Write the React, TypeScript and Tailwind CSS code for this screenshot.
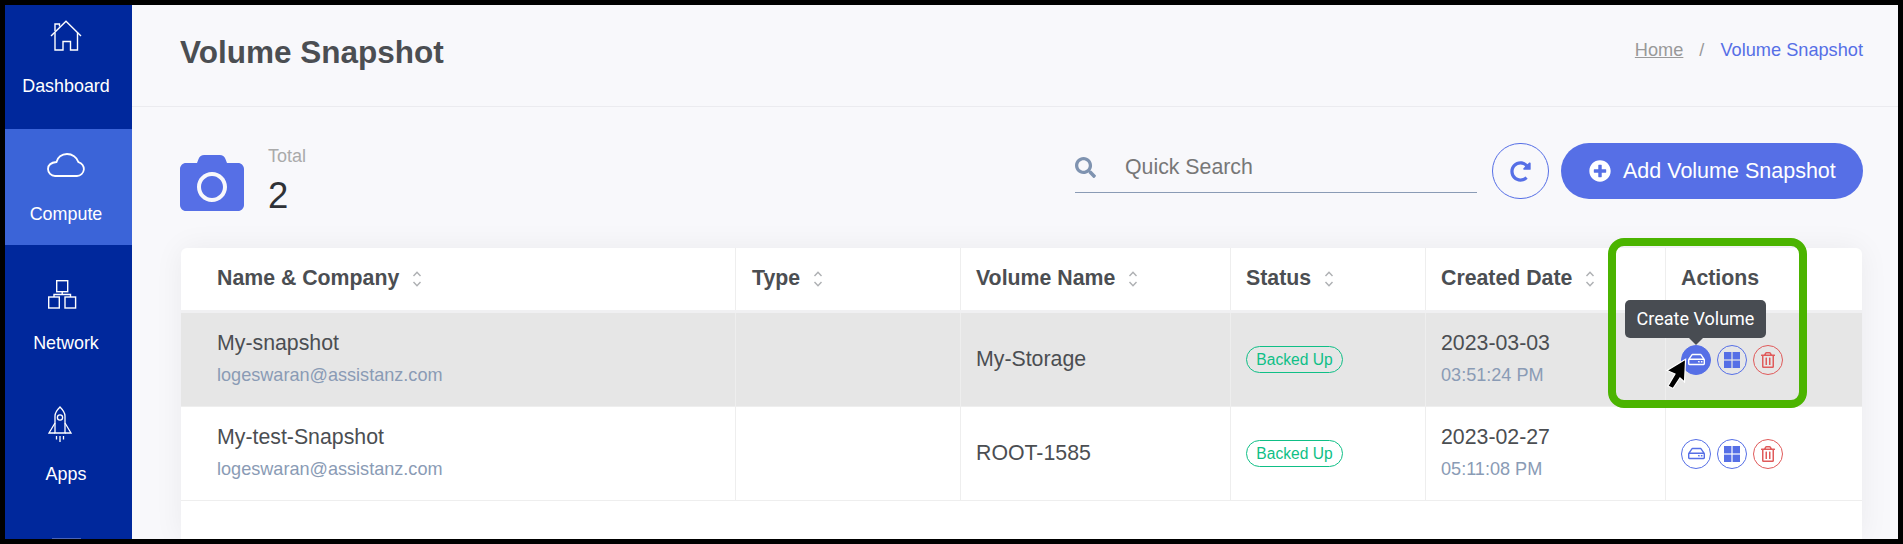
import React from "react";
import { FaCamera, FaPlusCircle, FaRedoAlt, FaRegHdd, FaRegTrashAlt, FaSearch } from "react-icons/fa";

function HomeIcon() {
  return (
    <svg width="32" height="31" viewBox="0 0 32 31" fill="none" stroke="white" strokeWidth="1.4">
      <path d="M1 16 16 1.2 31 16" />
      <path d="M5 11V4H9.5V6.5" />
      <path d="M5 12.5V30H13V21.5H20.5V30H27.5V12.5" />
    </svg>
  );
}

function CloudIcon() {
  return (
    <svg width="38" height="24" viewBox="0 0 38 24" fill="none" stroke="white" strokeWidth="1.8">
      <path d="M8 23H30a7 7 0 0 0 1.5-13.8C30 4 25 1 20 1 14.5 1 10.5 4.5 9.5 9 4.5 9.5 1 12 1 16a7 7 0 0 0 7 7Z" />
    </svg>
  );
}

function NetworkIcon() {
  return (
    <svg width="29" height="29" viewBox="0 0 29 29" fill="none" stroke="white" strokeWidth="1.4">
      <rect x="8.7" y="0.7" width="11" height="11" />
      <rect x="0.7" y="17" width="10.6" height="11" />
      <rect x="17" y="17" width="10.6" height="11" />
      <path d="M14.2 11.7V14.5M6 17V14.5H22.5V17" />
    </svg>
  );
}

function RocketIcon() {
  return (
    <svg width="24" height="36" viewBox="0 0 24 36" fill="none" stroke="white" strokeWidth="1.3">
      <path d="M7 27V10C7 6 10 3 12 1 14 3 17 6 17 10V27Z" />
      <path d="M7 17 1 27H7M17 17 23 27H17" />
      <circle cx="12" cy="11.5" r="2.6" />
      <path d="M8.5 30V33.5M12 30V36M15.5 30V33.5" />
    </svg>
  );
}

function GridIcon() {
  return (
    <svg width="16" height="16" viewBox="0 0 16 16" fill="currentColor">
      <rect x="0" y="0" width="7.4" height="7.4" />
      <rect x="8.6" y="0" width="7.4" height="7.4" />
      <rect x="0" y="8.6" width="7.4" height="7.4" />
      <rect x="8.6" y="8.6" width="7.4" height="7.4" />
    </svg>
  );
}

function SortIcon() {
  return (
    <svg width="10" height="16" viewBox="0 0 10 16" fill="none" stroke="#aeb0b3" strokeWidth="1.4" className="ml-[13px] shrink-0">
      <path d="M1.5 5 5 1.2 8.5 5M1.5 11 5 14.8 8.5 11" />
    </svg>
  );
}

function SideItem({ label, icon, active, pt, h, mt, height }: { label: string; icon: React.ReactNode; active?: boolean; pt: string; h: string; mt: string; height: string }) {
  return (
    <div className={`flex flex-col items-center pr-[5px] text-white text-[17.9px] leading-[22px] ${height} ${pt} ${active ? "bg-[#3b64d8]" : ""}`}>
      <div className={`flex items-center justify-center ${h}`}>{icon}</div>
      <div className={mt}>{label}</div>
    </div>
  );
}

function Head({ children, pl }: { children: React.ReactNode; pl: string }) {
  return (
    <div className={`flex items-center border-r border-[#eeeeee] font-bold text-[21.3px] text-[#4b4e52] ${pl}`}>
      {children}
      <SortIcon />
    </div>
  );
}

function RoundBtn({ children, color, filled }: { children: React.ReactNode; color: "blue" | "red"; filled?: boolean }) {
  const cls = filled
    ? "bg-[#566fe6] border-[#566fe6] text-white"
    : color === "blue"
    ? "border-[#566fe6] text-[#566fe6]"
    : "border-[#e05a5a] text-[#e05a5a]";
  return (
    <div className={`w-[30px] h-[30px] rounded-full border-[1.3px] flex items-center justify-center ${cls}`}>{children}</div>
  );
}

function Row({ name, volume, date, time, hover }: { name: string; volume: string; date: string; time: string; hover?: boolean }) {
  const cell = "border-r border-[#eeeeee] flex flex-col justify-center";
  return (
    <div className={`grid grid-cols-[555px_225px_270px_195px_240px_196px] h-[94px] border-b border-[#eeeeee] ${hover ? "bg-[#e6e6e6]" : ""}`}>
      <div className={`${cell} pl-9 pb-1`}>
        <div className="text-[21.3px] leading-[26px] text-[#4b4e52]">{name}</div>
        <div className="text-[18.1px] leading-[22px] text-[#8a9bb5] mt-2">logeswaran@assistanz.com</div>
      </div>
      <div className={cell} />
      <div className={`${cell} pl-[15px] text-[21.3px] text-[#4b4e52]`}>{volume}</div>
      <div className={`${cell} pl-[15px]`}>
        <div className="w-[97px] h-[27px] rounded-full border-[1.7px] border-[#0fbf86] text-[#0fbf86] text-[15.6px] flex items-center justify-center">Backed Up</div>
      </div>
      <div className={`${cell} pl-[15px] pb-1`}>
        <div className="text-[21.3px] leading-[26px] text-[#4b4e52]">{date}</div>
        <div className="text-[18.1px] leading-[22px] text-[#8a9bb5] mt-2">{time}</div>
      </div>
      <div className="pl-[15px] flex items-center gap-[6px]">
        <div className="relative">
          <RoundBtn color="blue" filled={hover}>
            <FaRegHdd size={17} />
          </RoundBtn>
          {hover && (
            <>
              <div className="absolute left-[-56px] top-[-45px] w-[141px] h-[38px] rounded-[5px] bg-[#484c52] text-white text-[18px] flex items-center justify-center [font-family:Roboto,sans-serif] whitespace-nowrap">
                Create Volume
              </div>
              <div className="absolute left-[8px] top-[-7px] w-0 h-0 border-l-[7px] border-r-[7px] border-t-[7px] border-l-transparent border-r-transparent border-t-[#484c52]" />
              <svg width="30" height="36" viewBox="0 0 30 36" className="absolute left-[-21px] top-[11px]">
                <path d="M25.6 3.3 7 14.5 15 18 8 30 13 32.5 20 22 24.5 26Z" fill="black" stroke="white" strokeWidth="1.2" />
              </svg>
            </>
          )}
        </div>
        <RoundBtn color="blue">
          <GridIcon />
        </RoundBtn>
        <RoundBtn color="red">
          <FaRegTrashAlt size={16} />
        </RoundBtn>
      </div>
    </div>
  );
}

export default function App() {
  return (
    <div className="h-[544px] border-[5px] border-black flex overflow-hidden bg-[#f8f8fb] [font-family:'Liberation_Sans',Arial,sans-serif]">
      <aside className="w-[127px] shrink-0 bg-[#00289c] flex flex-col">
        <SideItem label="Dashboard" icon={<HomeIcon />} height="h-[124px]" pt="pt-[15px]" h="h-[30px]" mt="mt-[25px]" />
        <SideItem label="Compute" icon={<CloudIcon />} active height="h-[116px]" pt="pt-[24px]" h="h-[24px]" mt="mt-[26px]" />
        <SideItem label="Network" icon={<NetworkIcon />} height="h-[131px]" pt="pt-[35px]" h="h-[29px] mr-[8px]" mt="mt-[23px]" />
        <SideItem label="Apps" icon={<RocketIcon />} height="h-[131px]" pt="pt-[30px]" h="h-[36px] mr-[12px]" mt="mt-[21px]" />
        <div className="w-[29px] h-[1px] mt-[31px] ml-[47px] bg-[#4a64b8]" />
      </aside>
      <main className="flex-1 min-w-0 flex flex-col">
        <header className="h-[102px] shrink-0 border-b border-[#ebebef] pl-12 pr-[35px] flex items-center justify-between pb-[5px]">
          <h1 className="text-[31.5px] font-bold text-[#4b4e52]">Volume Snapshot</h1>
          <div className="text-[18.2px] flex items-center mt-[-4px]">
            <span className="text-[#999999] underline">Home</span>
            <span className="text-[#999999] mx-[16px]">/</span>
            <span className="text-[#566fe6]">Volume Snapshot</span>
          </div>
        </header>
        <div className="pl-[48px] pr-[35px] pt-9 flex items-start h-[141px] shrink-0">
          <div className="mt-[8px] text-[#566fe6]">
            <FaCamera size={64} />
          </div>
          <div className="ml-[24px] mt-[3px]">
            <div className="text-[18px] leading-5 text-[#aaaaaa]">Total</div>
            <div className="text-[36.5px] leading-[42px] mt-[9px] text-[#2f3237]">2</div>
          </div>
          <div className="ml-auto flex items-start">
            <div className="w-[402px] h-[50px] border-b-[1.5px] border-[#8a9bb5] flex items-center">
              <FaSearch size={21} className="text-[#7f93b0]" />
              <span className="ml-[29px] text-[21.3px] text-[#777777]">Quick Search</span>
            </div>
            <div className="ml-[15px] w-[57px] h-[56px] rounded-full border border-[#566fe6] text-[#566fe6] flex items-center justify-center">
              <FaRedoAlt size={21} />
            </div>
            <div className="ml-3 w-[302px] h-[56px] rounded-full bg-[#566fe6] text-white flex items-center pl-[28px]">
              <FaPlusCircle size={22} />
              <span className="ml-[12px] text-[21.5px]">Add Volume Snapshot</span>
            </div>
          </div>
        </div>
        <div className="relative ml-[49px] w-[1681px] flex-1 bg-white rounded-t-md shadow-[0_0_30px_rgba(0,0,0,0.06)] min-h-0">
          <div className="grid grid-cols-[555px_225px_270px_195px_240px_196px] h-[65px] border-b-[3px] border-[#f0f0f2]">
            <Head pl="pl-9">Name &amp; Company</Head>
            <Head pl="pl-4">Type</Head>
            <Head pl="pl-[15px]">Volume Name</Head>
            <Head pl="pl-[15px]">Status</Head>
            <Head pl="pl-[15px]">Created Date</Head>
            <div className="flex items-center pl-[15px] font-bold text-[21.3px] text-[#4b4e52]">Actions</div>
          </div>
          <Row hover name="My-snapshot" volume="My-Storage" date="2023-03-03" time="03:51:24 PM" />
          <Row name="My-test-Snapshot" volume="ROOT-1585" date="2023-02-27" time="05:11:08 PM" />
          <div className="absolute left-[1427px] top-[-10px] w-[199px] h-[170px] border-[8px] border-[#4bb400] rounded-[16px] pointer-events-none" />
        </div>
      </main>
    </div>
  );
}
